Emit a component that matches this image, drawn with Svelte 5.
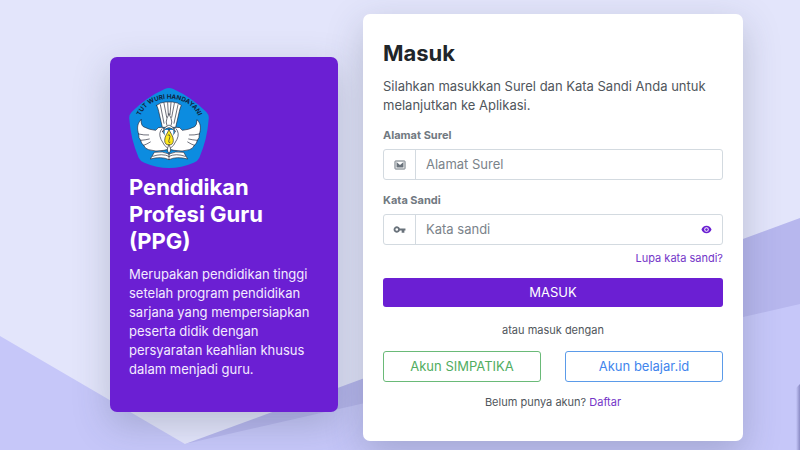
<script>
  let email = $state('');
  let password = $state('');
  let visible = $state(false);
</script>

<div class="page">
  <svg class="backdrop" viewBox="0 0 800 450" preserveAspectRatio="none" aria-hidden="true">
    <defs>
      <linearGradient id="edge">
        <stop offset="0" stop-color="#8b8bc4" stop-opacity="0" />
        <stop offset="1" stop-color="#8b8bc4" />
      </linearGradient>
    </defs>
    <path fill="#e3e5fb" d="M0 0H800V450H0z" />
    <path fill="#b7b7ee" d="M185 444L800 218V310L300 430z" />
    <path fill="#c6c7f9" d="M0 336L185 444L800 304V450H0z" />
    <path fill="url(#edge)" d="M796 388L800 384V450H796z" />
  </svg>

  <main>
    <section class="intro">
      <svg class="logo" viewBox="27 24 240 240" role="img" aria-label="Tut Wuri Handayani">
        <path fill="#0c8ce0" d="M134 27Q147 21 160 27Q215 52 259 96Q268 105 266 118Q262 178 238 233Q233 244 221 248Q147 280 73 248Q61 244 56 233Q32 178 28 118Q26 105 35 96Q79 52 134 27z" />
        <path id="motto" fill="none" d="M58 116C80 36 215 36 237 116" />
        <text class="motto"><textPath href="#motto" startOffset="50%" text-anchor="middle">TUT WURI HANDAYANI</textPath></text>
        <g fill="#fff" stroke="#25283a" stroke-width="2" stroke-linejoin="round" stroke-linecap="round">
          <path d="M110 76L122 69L137 66H157L172 69L184 76Q180 84 178 94L167 142H127L116 94Q114 84 110 76z" />
          <path fill="none" d="M121 74L132 130M132 70L140 112M143 68L145 104M153 68L150 104M163 70L155 112M174 74L162 130" />
          <path d="M63 119C49 132 52 151 56 162Q55 174 62 181Q63 190 71 196Q76 207 86 209Q106 216 132 211Q147 205 162 211Q188 216 208 209Q218 207 223 196Q231 190 232 181Q239 174 238 162C242 151 245 132 231 119Q231 135 224 140Q205 150 187 151Q180 139 168 142Q158 145 164 158L157 168L147 152L137 168L130 158Q136 145 126 142Q114 139 107 151Q89 150 70 140Q63 135 63 119z" />
          <path fill="none" d="M56 162Q72 166 86 165M62 181Q76 180 88 177M71 196Q80 193 91 186M238 162Q222 166 208 165M232 181Q218 180 206 177M223 196Q214 193 203 186M126 146Q114 159 123 178Q132 199 147 208Q162 199 171 178Q180 159 168 146" />
          <path d="M147 102Q130 130 147 143Q164 130 147 102z" />
          <path d="M127 155Q135 138 147 135Q159 138 167 155Q156 143 147 143Q138 143 127 155z" />
          <path stroke="none" d="M134 150H160V185H134z" />
          <path fill="#ffe81c" d="M147 148C143 160 134 167 134 181Q134 195 147 195Q160 195 160 181C160 167 151 160 147 148z" />
          <path fill="none" d="M144 165Q149 161 150 170L146 184Q146 190 150 187" />
          <path d="M147 195Q137 209 147 220Q157 209 147 195z" />
          <path d="M147 222Q128 212 103 217L91 237Q125 228 147 239Q169 228 203 237L191 217Q166 212 147 222z" />
          <path fill="none" d="M147 222V239M147 229Q126 219 98 229M147 229Q168 219 196 229" />
        </g>
      </svg>
      <h1>Pendidikan Profesi Guru (PPG)</h1>
      <p>Merupakan pendidikan tinggi setelah program pendidikan sarjana yang mempersiapkan peserta didik dengan persyaratan keahlian khusus dalam menjadi guru.</p>
    </section>

    <section class="login">
      <h2>Masuk</h2>
      <p class="lead">Silahkan masukkan Surel dan Kata Sandi Anda untuk melanjutkan ke Aplikasi.</p>

      <form onsubmit={(e) => e.preventDefault()}>
        <label for="email">Alamat Surel</label>
        <div class="field">
          <span class="icon">
            <svg viewBox="0 0 24 24" width="12" height="12" aria-hidden="true">
              <path fill="none" stroke="#69727b" stroke-width="2" d="M3 4H21Q22 4 22 5V19Q22 20 21 20H3Q2 20 2 19V5Q2 4 3 4z" />
              <path fill="#69727b" d="M5 6L12 12L19 6V17H5z" />
            </svg>
          </span>
          <input id="email" type="email" placeholder="Alamat Surel" bind:value={email} />
        </div>

        <label for="password">Kata Sandi</label>
        <div class="field">
          <span class="icon">
            <svg viewBox="0 0 24 24" width="13" height="13" aria-hidden="true">
              <path fill="#69727b" fill-rule="evenodd" d="M12.700 10A6 6 0 1 0 12.700 14H16V18H21V14H23V10zM7 14.500A2.500 2.500 0 1 1 7 9.500A2.500 2.500 0 0 1 7 14.500z" />
            </svg>
          </span>
          <input id="password" type={visible ? 'text' : 'password'} placeholder="Kata sandi" bind:value={password} />
          <button type="button" class="reveal" aria-label="Tampilkan kata sandi" onclick={() => (visible = !visible)}>
            <svg viewBox="0 0 24 24" width="11" height="11" aria-hidden="true">
              <path fill="#6a1fd2" fill-rule="evenodd" d="M12 4C7 4 2.700 7.100 1 12C2.700 16.900 7 20 12 20S21.300 16.900 23 12C21.300 7.100 17 4 12 4zM12 17A5 5 0 1 1 12 7A5 5 0 0 1 12 17zM12 9A3 3 0 1 0 12 15A3 3 0 0 0 12 9z" />
            </svg>
          </button>
        </div>

        <a class="forgot" href="#lupa">Lupa kata sandi?</a>
        <button type="submit" class="submit">MASUK</button>
      </form>

      <p class="note">atau masuk dengan</p>
      <div class="accounts">
        <button type="button" class="green">Akun SIMPATIKA</button>
        <button type="button" class="blue">Akun belajar.id</button>
      </div>
      <p class="note">Belum punya akun? <a href="#daftar">Daftar</a></p>
    </section>
  </main>
</div>

<style>
  :global(body) {
    margin: 0;
  }

  .page {
    position: relative;
    min-height: 100vh;
    overflow: hidden;
    font: 13px/19px Inter, 'Liberation Sans', sans-serif;
    color: #50565c;
  }

  .page * {
    box-sizing: border-box;
  }

  .backdrop {
    position: absolute;
    inset: 0;
    width: 100%;
    height: 100%;
  }

  main {
    position: relative;
    display: grid;
    grid-template-columns: 3fr 5fr;
    align-items: start;
    gap: 25px;
    max-width: 800px;
    margin: 0 auto;
    padding: 14px 57px 8px 110px;
  }

  section {
    border-radius: 7px;
    box-shadow: 0 12px 36px rgba(60, 70, 90, 0.25);
  }

  .intro {
    z-index: 1;
    margin-top: 43px;
    padding: 31px 19px 33px;
    background: #6b1fd3;
    color: #f3ebff;
  }

  .login {
    z-index: 1;
    padding: 26px 20px 31px;
    background: #fff;
  }

  .intro {
    z-index: 2;
    clip-path: inset(-60px -25px -60px -60px);
  }

  .logo {
    display: block;
    width: 80px;
    height: 80px;
    margin-bottom: 6px;
  }

  .motto {
    font: bold 19px Inter, sans-serif;
    fill: #10243c;
  }

  h1,
  h2 {
    margin: 0;
    font-size: 22px;
    line-height: 27px;
    font-weight: 700;
  }

  h1 {
    color: #fff;
  }

  h2 {
    color: #212529;
  }

  p {
    margin: 0;
  }

  .intro p {
    margin-top: 10px;
  }

  .lead {
    margin: 10px 0 12px;
  }

  form {
    display: flex;
    flex-direction: column;
  }

  label {
    font-size: 11px;
    line-height: 16px;
    font-weight: 700;
    color: #717981;
    margin-bottom: 6px;
  }

  .field {
    display: flex;
    height: 31px;
    border: 1px solid #d3dae0;
    border-radius: 3px;
    margin-bottom: 12px;
  }

  .icon {
    display: flex;
    align-items: center;
    justify-content: center;
    width: 32px;
    border-right: 1px solid #d3dae0;
  }

  input {
    flex: 1;
    min-width: 0;
    padding: 0 10px;
    border: 0;
    outline: 0;
    background: transparent;
    font: inherit;
    color: #495057;
  }

  input::placeholder {
    color: #7b838a;
    opacity: 1;
  }

  button {
    font: inherit;
    cursor: pointer;
  }

  .reveal {
    display: flex;
    align-items: center;
    justify-content: center;
    width: 32px;
    padding: 0;
    border: 0;
    background: transparent;
  }

  a {
    color: #7435c8;
    text-decoration: none;
  }

  .forgot {
    align-self: flex-end;
    margin-top: -7px;
    font-size: 11px;
    line-height: 16px;
  }

  .submit {
    height: 29px;
    margin: 12px 0 15px;
    border: 0;
    border-radius: 3px;
    background: #6b1fd3;
    color: #fff;
  }

  .note {
    font-size: 11px;
    line-height: 16px;
    text-align: center;
  }

  .accounts {
    display: flex;
    gap: 24px;
    margin: 13px 0 12px;
  }

  .accounts button {
    flex: 1;
    height: 31px;
    padding: 0;
    border: 1px solid;
    border-radius: 3px;
    background: #fff;
  }

  .accounts .green {
    color: #51ad61;
    border-color: #6aba78;
  }

  .accounts .blue {
    color: #4285ed;
    border-color: #5b9be9;
  }

  @media (max-width: 640px) {
    main {
      grid-template-columns: 1fr;
      padding: 16px;
    }

    .intro {
      margin-top: 0;
    }
  }
</style>
